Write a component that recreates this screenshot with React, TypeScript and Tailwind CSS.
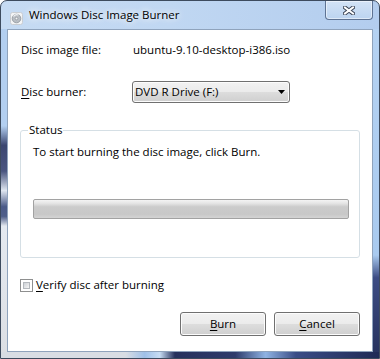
const btnBase =
  "flex items-center rounded-[3px] border border-[#707070] bg-[linear-gradient(to_bottom,#f2f2f2_0%,#ebebeb_50%,#dddddd_51%,#cfcfcf_100%)] shadow-[inset_0_0_0_1px_#fcfcfc]";

function DiscIcon() {
  return (
    <svg width="13" height="13" viewBox="0 0 13 13">
      <rect x="0.5" y="0.5" width="12" height="12" rx="2" fill="#f3f4f5" stroke="#c9cdd2" />
      <circle cx="6.5" cy="6.5" r="4.3" fill="#b9bec4" stroke="#8e949b" strokeWidth="0.8" />
      <path d="M3.5 4.5 A4 4 0 0 1 8.5 3" stroke="#eef0f2" strokeWidth="1.2" fill="none" />
      <circle cx="6.5" cy="6.5" r="1.3" fill="#f3f4f5" stroke="#80868d" strokeWidth="0.6" />
    </svg>
  );
}

function CloseGlyph() {
  return (
    <svg width="12" height="9" viewBox="0 0 12 9">
      <path d="M2 1.5 L10 7.5 M10 1.5 L2 7.5" stroke="#3b4455" strokeWidth="4" strokeLinecap="square" />
      <path d="M2 1.5 L10 7.5 M10 1.5 L2 7.5" stroke="#ffffff" strokeWidth="2" strokeLinecap="square" />
    </svg>
  );
}

export default function App() {
  return (
    <div className="w-[380px] h-[359px] flex flex-col overflow-hidden rounded-t-[7px] border border-[#3d4b5e] bg-[linear-gradient(to_right,#c6dbf3_0%,#c0d7f2_45%,#b3cdee_100%)] font-['Open_Sans',sans-serif] text-[11.5px] leading-[16px] text-black">
      {/* Title bar */}
      <div className="h-[28px] flex items-start pl-[9px] pr-[6px]">
        <div className="mt-[11px]">
          <DiscIcon />
        </div>
        <div className="ml-[6px] mt-[6px] text-[11.5px] [text-shadow:0_0_6px_#ffffff,0_0_10px_rgba(255,255,255,0.8)]">
          Windows Disc Image Burner
        </div>
        <div className="flex-1" />
        <div className="w-[48px] h-[19px] flex items-center justify-center rounded-b-[4px] border-x border-b border-[#5e7393] bg-[linear-gradient(to_bottom,#d3e3f6,#bcd4f0)] shadow-[inset_0_0_0_1px_rgba(255,255,255,0.5)]">
          <CloseGlyph />
        </div>
      </div>

      {/* Middle with side strips */}
      <div className="flex flex-1">
        <div className="w-[6px] bg-[linear-gradient(to_bottom,#b3cff0_0%,#b3cff0_30%,#3b4670_36%,#4a5580_44%,#dfe6f0_50%,#4a5a88_55%,#4f5e8a_58%,#e4e9f0_61%,#dcdfe4_100%)]" />
        <div className="flex-1 flex flex-col border border-[#8fa3bc] bg-white">
          <div className="flex pl-[13px] mt-[12px]">
            <div className="w-[112px]">Disc image file:</div>
            <div>ubuntu-9.10-desktop-i386.iso</div>
          </div>
          <div className="flex items-center pl-[13px] mt-[23px] h-[22px]">
            <div className="w-[111px]">
              <span className="underline underline-offset-[2px]">D</span>isc burner:
            </div>
            <div className={`${btnBase} w-[158px] h-[22px] justify-between pl-[2px] pr-[4px]`}>
              <span>DVD R Drive (F:)</span>
              <svg width="7" height="4" viewBox="0 0 7 4">
                <path d="M0 0 L7 0 L3.5 4 Z" fill="#000000" />
              </svg>
            </div>
          </div>

          <fieldset className="mx-[12px] mt-[19px] rounded-[3px] border border-[#d5dfe5] pl-[12px] pb-[38px]">
            <legend className="ml-[-5px] px-[1px] leading-[16px]">Status</legend>
            <div className="mt-[6px]">To start burning the disc image, click Burn.</div>
            <div className="mt-[39px] w-[316px] h-[20px] rounded-[2px] border border-[#a2a2a2] bg-[linear-gradient(to_bottom,#f4f4f4_0%,#e3e3e3_20%,#cbcbcb_38%,#c8c8c8_80%,#d4d4d4_100%)]" />
          </fieldset>

          <div className="flex items-center pl-[12px] mt-[19px] h-[16px]">
            <div className="w-[13px] h-[13px] border border-[#8e8f8f] bg-white p-[2px] flex">
              <div className="flex-1 border border-[#b4b8bd] bg-[linear-gradient(135deg,#cdd1d6,#f5f5f5)]" />
            </div>
            <div className="ml-[3px]">
              <span className="underline underline-offset-[2px]">V</span>erify disc after burning
            </div>
          </div>

          <div className="flex justify-end gap-[8px] pr-[12px] mt-[19px]">
            <div className={`${btnBase} justify-center w-[86px] h-[24px]`}>
              <span>
                <span className="underline underline-offset-[2px]">B</span>urn
              </span>
            </div>
            <div className={`${btnBase} justify-center w-[86px] h-[24px]`}>
              <span>
                <span className="underline underline-offset-[2px]">C</span>ancel
              </span>
            </div>
          </div>
        </div>
        <div className="w-[6px] bg-[linear-gradient(to_bottom,#b5d2f2_0%,#a9caef_70%,#3d4d84_77%,#27335f_100%)]" />
      </div>

      {/* Bottom strip */}
      <div className="h-[6px] bg-[linear-gradient(to_right,#d8dde4_0%,#d8dde4_33%,#9fc0e8_38%,#c7dcf3_42%,#26315c_46%,#2e3b6b_62%,#8fb3e3_70%,#3a4d86_78%,#1f2a55_100%)]" />
    </div>
  );
}
